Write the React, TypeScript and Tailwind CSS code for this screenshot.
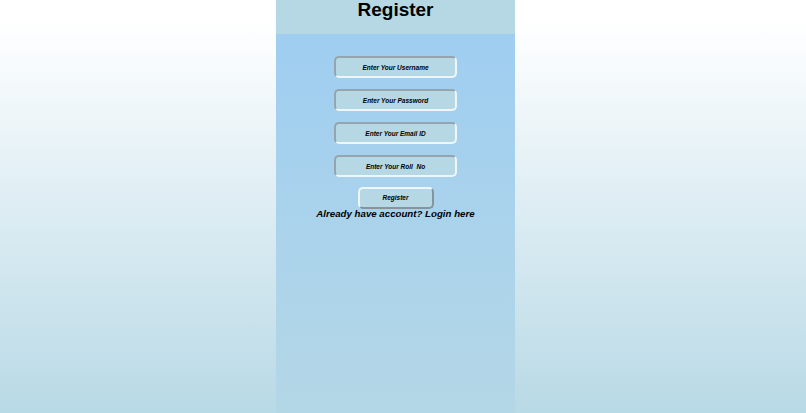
import { useState } from 'react';

const fields = [
    { name: 'username', placeholder: 'Enter Your Username', type: 'text' },
    { name: 'password', placeholder: 'Enter Your Password', type: 'password' },
    { name: 'email', placeholder: 'Enter Your Email ID', type: 'email' },
    { name: 'roll', placeholder: 'Enter Your Roll  No', type: 'text' },
];

export default function App() {
    const [values, setValues] = useState<Record<string, string>>({});

    return (
        <div className="min-h-screen h-[413px] bg-gradient-to-b from-white from-[5%] to-[#b8d9e6] font-['Liberation_Sans',Arial,sans-serif]">
            <div className="ml-[276px] w-[239px] h-full flex flex-col bg-gradient-to-b from-[#9dcdf2] to-[#b4d7e6]">
                <div className="h-[34px] bg-[#b5d8e4] flex justify-center">
                    <h1 className="text-[19px] leading-[19px] font-bold text-black">Register</h1>
                </div>

                <form
                    className="flex flex-col items-center pt-[22px]"
                    onSubmit={(e) => e.preventDefault()}
                >
                    {fields.map((f) => (
                        <input
                            key={f.name}
                            type={f.type}
                            placeholder={f.placeholder}
                            value={values[f.name] ?? ''}
                            onChange={(e) => setValues({ ...values, [f.name]: e.target.value })}
                            className="w-[123px] h-[22px] mb-[11px] rounded-[5px] border-2 border-t-[#95a4ad] border-l-[#95a4ad] border-b-[#eef6fa] border-r-[#eef6fa] bg-[#b6d8e4] text-center text-[6.5px] font-bold italic text-black placeholder:text-black outline-none"
                        />
                    ))}

                    <button
                        type="submit"
                        className="w-[76px] h-[22px] -mt-px rounded-[5px] border-2 border-t-[#eef6fa] border-l-[#eef6fa] border-b-[#86949c] border-r-[#86949c] bg-[#b6d8e4] text-[6.5px] font-bold italic text-black"
                    >
                        Register
                    </button>

                    <a href="#" className="-mt-px text-[9.7px] leading-[11px] font-bold italic text-black">
                        Already have account? Login here
                    </a>
                </form>
            </div>
        </div>
    );
}
